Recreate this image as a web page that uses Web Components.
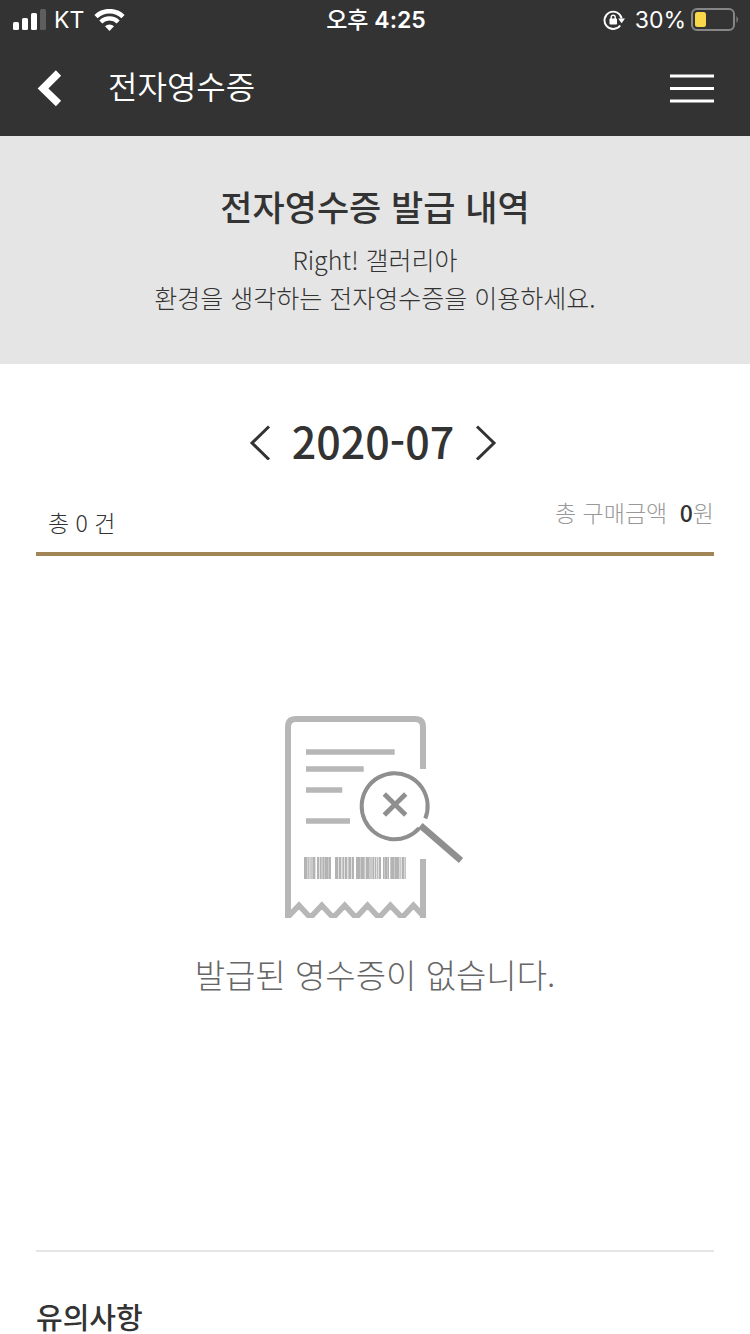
<!DOCTYPE html>
<html lang="ko">
<head>
<meta charset="utf-8">
<meta name="viewport" content="width=device-width, initial-scale=1">
<title>전자영수증</title>
<style>
  html, body { margin: 0; }
  body {
    background: #fff;
    color: #333;
    font-family: "Noto Sans CJK KR", sans-serif;
  }
</style>
</head>
<body>
<receipt-page></receipt-page>

<script>
const define = (name, markup) => {
  const template = document.createElement('template');
  template.innerHTML = markup;
  customElements.define(name, class extends HTMLElement {
    constructor() {
      super();
      this.attachShadow({ mode: 'open' }).append(template.content.cloneNode(true));
    }
  });
};

define('status-bar', `
  <style>
    :host {
      display: grid; grid-template-columns: 1fr auto 1fr; align-items: center;
      height: 40px; padding: 0 11px 0 13px;
      background: #333; color: #fff;
      font: 400 23px/28px Inter, "Noto Sans CJK KR", sans-serif;
    }
    .side { display: flex; align-items: center; }
    .end { justify-content: flex-end; }
    .carrier { margin: 0 10px 0 8px; }
    .time { font-weight: 600; }
    .time span { font-weight: 500; }
    .lock { margin-right: 10px; }
    .battery { margin-left: 5px; }
    svg { display: block; flex: none; }
  </style>
  <div class="side">
    <svg width="33" height="22" viewBox="0 0 33 22" fill="#fff" aria-hidden="true">
      <rect x="0" y="13" width="6" height="8" rx="1.5"/><rect x="9" y="9" width="6" height="12" rx="1.5"/>
      <rect x="18" y="4" width="6" height="17" rx="1.5"/><rect x="27" y="0" width="6" height="21" rx="1.5" fill="#5e5e5e"/>
    </svg>
    <span class="carrier">KT</span>
    <svg width="31" height="22" viewBox="0 0 31 22" fill="none" stroke="#fff" aria-hidden="true">
      <path d="M2 7.6A19.5 19.5 0 0 1 29 7.6" stroke-width="4.6"/>
      <path d="M6.8 12.9A12.4 12.4 0 0 1 24.2 12.9" stroke-width="4.2"/>
      <path d="M11 17.2a6.600 6.600 0 0 1 9 0L15.500 22z" fill="#fff" stroke="none"/>
    </svg>
  </div>
  <div class="time"><span>오후</span> 4:25</div>
  <div class="side end">
    <svg class="lock" width="22" height="22" viewBox="0 0 22 22" fill="none" stroke="#fff" aria-hidden="true">
      <path d="M17.200 16.500A8.700 8.700 0 1 1 18.700 9.500" stroke-width="1.900"/>
      <path d="M15.200 9.400h6.800l-3.400 4.800z" fill="#fff" stroke="none"/>
      <rect x="6.500" y="9.500" width="7.500" height="6" rx=".8" fill="#fff" stroke="none"/>
      <path d="M8.200 10.500V8.200a2 2 0 0 1 4 0v2.300" stroke-width="1.400"/>
    </svg>
    <span>30%</span>
    <svg class="battery" width="48" height="24" viewBox="0 0 48 24" aria-hidden="true">
      <rect x="1" y="1" width="42" height="21" rx="5" fill="none" stroke="#868686" stroke-width="2"/>
      <path d="M45.500 8q3 3.500 0 7z" fill="#868686"/>
      <rect x="4" y="4" width="11" height="15" rx="2.500" fill="#f9d74a"/>
    </svg>
  </div>
`);

define('app-bar', `
  <style>
    :host {
      display: flex; align-items: center; height: 96px; padding: 0 36px;
      background: #333; color: #fff;
    }
    h1 {
      flex: 1; margin: 0 0 6px 44px;
      font-family: "Noto Sans CJK KR DemiLight", "Noto Sans CJK KR", sans-serif;
      font-size: 32px; line-height: 48px; font-weight: 350;
    }
    button { padding: 0; border: 0; background: none; cursor: pointer; }
    svg { display: block; }
  </style>
  <button type="button" aria-label="뒤로">
    <svg width="28" height="40" viewBox="0 0 28 40"><path d="M22.500 5L7 20.500 22.500 35.500" fill="none" stroke="#fff" stroke-width="7.500"/></svg>
  </button>
  <h1><slot></slot></h1>
  <button type="button" aria-label="메뉴">
    <svg width="44" height="30" viewBox="0 0 44 30" fill="#fff"><path d="M0 1.500h44v3H0zM0 14h44v3H0zM0 26.500h44v3H0z"/></svg>
  </button>
`);

define('intro-banner', `
  <style>
    :host { display: block; padding: 44px 36px 48px; background: #e5e5e5; text-align: center; }
    h2 { margin: 0 0 8px; font-size: 35px; line-height: 52px; font-weight: 500; }
    p { margin: 0; font-size: 25px; line-height: 38px; font-weight: 300; }
  </style>
  <h2><slot name="heading"></slot></h2>
  <p><slot></slot></p>
`);

define('month-picker', `
  <style>
    :host { display: flex; justify-content: center; align-items: center; gap: 20px; padding: 40px 40px 20px 36px; }
    h2 { margin: 0; font-size: 43px; line-height: 72px; font-weight: 500; }
    button { padding: 4px 0 0; border: 0; background: none; cursor: pointer; }
    svg { display: block; }
    path { fill: none; stroke: #333; stroke-width: 3; }
  </style>
  <button type="button" aria-label="이전 달"><svg width="24" height="36" viewBox="0 0 24 36"><path d="M21 2.500L4 19 21 35.500"/></svg></button>
  <h2><slot></slot></h2>
  <button type="button" aria-label="다음 달"><svg width="24" height="36" viewBox="0 0 24 36"><path d="M3 2.500L20 19 3 35.500"/></svg></button>
`);

define('purchase-summary', `
  <style>
    :host {
      display: flex; justify-content: space-between; align-items: flex-start;
      margin: 0 36px; height: 56px; border-bottom: 4px solid #a28557;
      font-size: 23px; line-height: 32px; font-weight: 300;
    }
    .count { padding: 10px 0 0 12px; }
    .total { color: #999; }
    b { margin-left: 6px; color: #333; font-weight: 500; }
  </style>
  <span class="count">총 0 건</span>
  <span class="total">총 구매금액 <b>0</b>원</span>
`);

define('empty-receipts', `
  <style>
    :host { display: flex; flex-direction: column; align-items: center; gap: 32px; padding: 160px 36px 252px; }
    p { margin: 0; color: #666; font-size: 33px; line-height: 48px; font-weight: 300; }
    svg { display: block; }
  </style>
  <svg width="180" height="202" viewBox="0 0 180 202" fill="none" stroke="#b7b7b7" aria-hidden="true">
    <path d="M138 53V11q0-8-8-8H11Q3 3 3 11V202M138 143V202" stroke-width="6"/>
    <path d="M1 203L14 189.300 25.300 201.600 36.800 189.300 48.200 201.600 59.700 189.300 71 201.600 82.500 189.300 94 201.600 105.400 189.300 117 201.600 128.400 189.300 138.500 200" stroke-width="5.600"/>
    <path d="M21 36H109.700M21 53H78.700M21 74H57.300M21 105H65" stroke-width="5.400"/>
    <g id="bars" stroke="none" fill="#b3b3b3"></g>
    <path d="M134.300 112.200A33 33 0 1 1 140.300 102.500" stroke="#8f8f8f" stroke-width="4"/>
    <path d="M135.500 109.500L176 144.500" stroke="#8f8f8f" stroke-width="6.500"/>
    <path d="M99.300 78L120.700 99M120.700 78L99.300 99" stroke="#8f8f8f" stroke-width="4.800"/>
  </svg>
  <p><slot></slot></p>
`);

define('notice-section', `
  <style>
    :host { display: block; margin: 0 36px; padding-top: 48px; border-top: 2px solid #e5e5e5; }
    h2 { margin: 0; font-size: 29px; line-height: 32px; font-weight: 500; }
  </style>
  <h2><slot></slot></h2>
`);

define('receipt-page', `
  <style>
    :host { display: block; }
  </style>
  <header>
    <status-bar></status-bar>
    <app-bar>전자영수증</app-bar>
  </header>
  <main>
    <intro-banner>
      <span slot="heading">전자영수증 발급 내역</span>
      Right! 갤러리아<br>환경을 생각하는 전자영수증을 이용하세요.
    </intro-banner>
    <month-picker>2020-07</month-picker>
    <purchase-summary></purchase-summary>
    <empty-receipts>발급된 영수증이 없습니다.</empty-receipts>
    <notice-section>유의사항</notice-section>
  </main>
`);

// Barcode stripes: [left, width] pairs along the bottom of the receipt icon.
const stripes = [[19,3.3],[23.2,1],[25.5,1],[27.5,2.5],[32,2],[35,1.5],[37.5,1.5],[39.5,3.5],[43.5,2.5],
  [50,3],[54,2],[57.5,1.5],[60,2],[63.5,2.5],[67,2],[71,4],[75.5,4],[81,3.5],[85.5,1],[87.5,1.5],[90,1],[92,.8],
  [94,2],[98,1],[99.5,3],[103,1],[105.5,4],[110,3.5],[112.5,1.5],[117,2],[114.5,1.2],[119.8,.8]];
const bars = document.querySelector('receipt-page').shadowRoot
  .querySelector('empty-receipts').shadowRoot.querySelector('#bars');
bars.innerHTML = '<path d="M19 141h12v22h-12zM32 141h14v22h-14zM50 141h18v22h-18zM71 141h10v22h-10zM81 141h15v22h-15zM98 141h6v22h-6zM105 141h9v22h-9zM116 141h5v22h-5z" opacity=".4"/>' +
  stripes.map(([x, w]) => `<rect x="${x}" y="141" width="${w}" height="22"/>`).join('');
</script>
</body>
</html>
